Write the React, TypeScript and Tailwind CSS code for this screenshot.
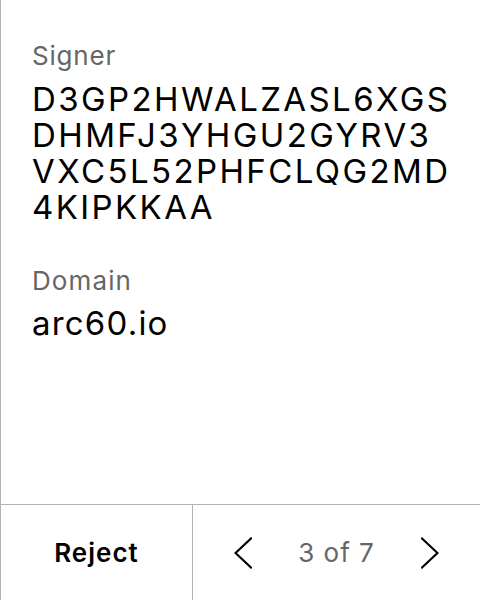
function Chevron({ dir }: { dir: 'left' | 'right' }) {
  return (
    <svg width="18" height="32" viewBox="0 0 18 32" fill="none" stroke="black" strokeWidth="2.2" strokeLinecap="square">
      {dir === 'left' ? <polyline points="17,1.5 1.5,16 17,30.5" /> : <polyline points="1,1.5 16.5,16 1,30.5" />}
    </svg>
  )
}

export default function App() {
  return (
    <div className="flex h-[600px] w-[480px] flex-col border-l border-[#b3b3b3] bg-white font-['Inter',sans-serif] text-black">
      <div className="flex-1 pl-[31px] pr-7 pt-10">
        <div className="text-[26px] leading-8 tracking-[0.8px] text-[#666666]">Signer</div>
        <div className="mt-[9px] break-all text-[33px] leading-9 tracking-[2.4px]">
          D3GP2HWALZASL6XGSDHMFJ3YHGU2GYRV3VXC5L52PHFCLQG2MD4KIPKKAA
        </div>
        <div className="mt-10 text-[26px] leading-8 tracking-[1.1px] text-[#666666]">Domain</div>
        <div className="mt-2 text-[33px] leading-9 tracking-[1.2px]">arc60.io</div>
      </div>
      <div className="flex h-24 border-t border-[#b3b3b3]">
        <button className="w-[192px] border-r border-[#b3b3b3] text-[26px] font-semibold tracking-[1px]">Reject</button>
        <div className="flex flex-1 items-center justify-between px-[41px]">
          <Chevron dir="left" />
          <span className="text-[26px] tracking-[1px] text-[#666666]">3 of 7</span>
          <Chevron dir="right" />
        </div>
      </div>
    </div>
  )
}
